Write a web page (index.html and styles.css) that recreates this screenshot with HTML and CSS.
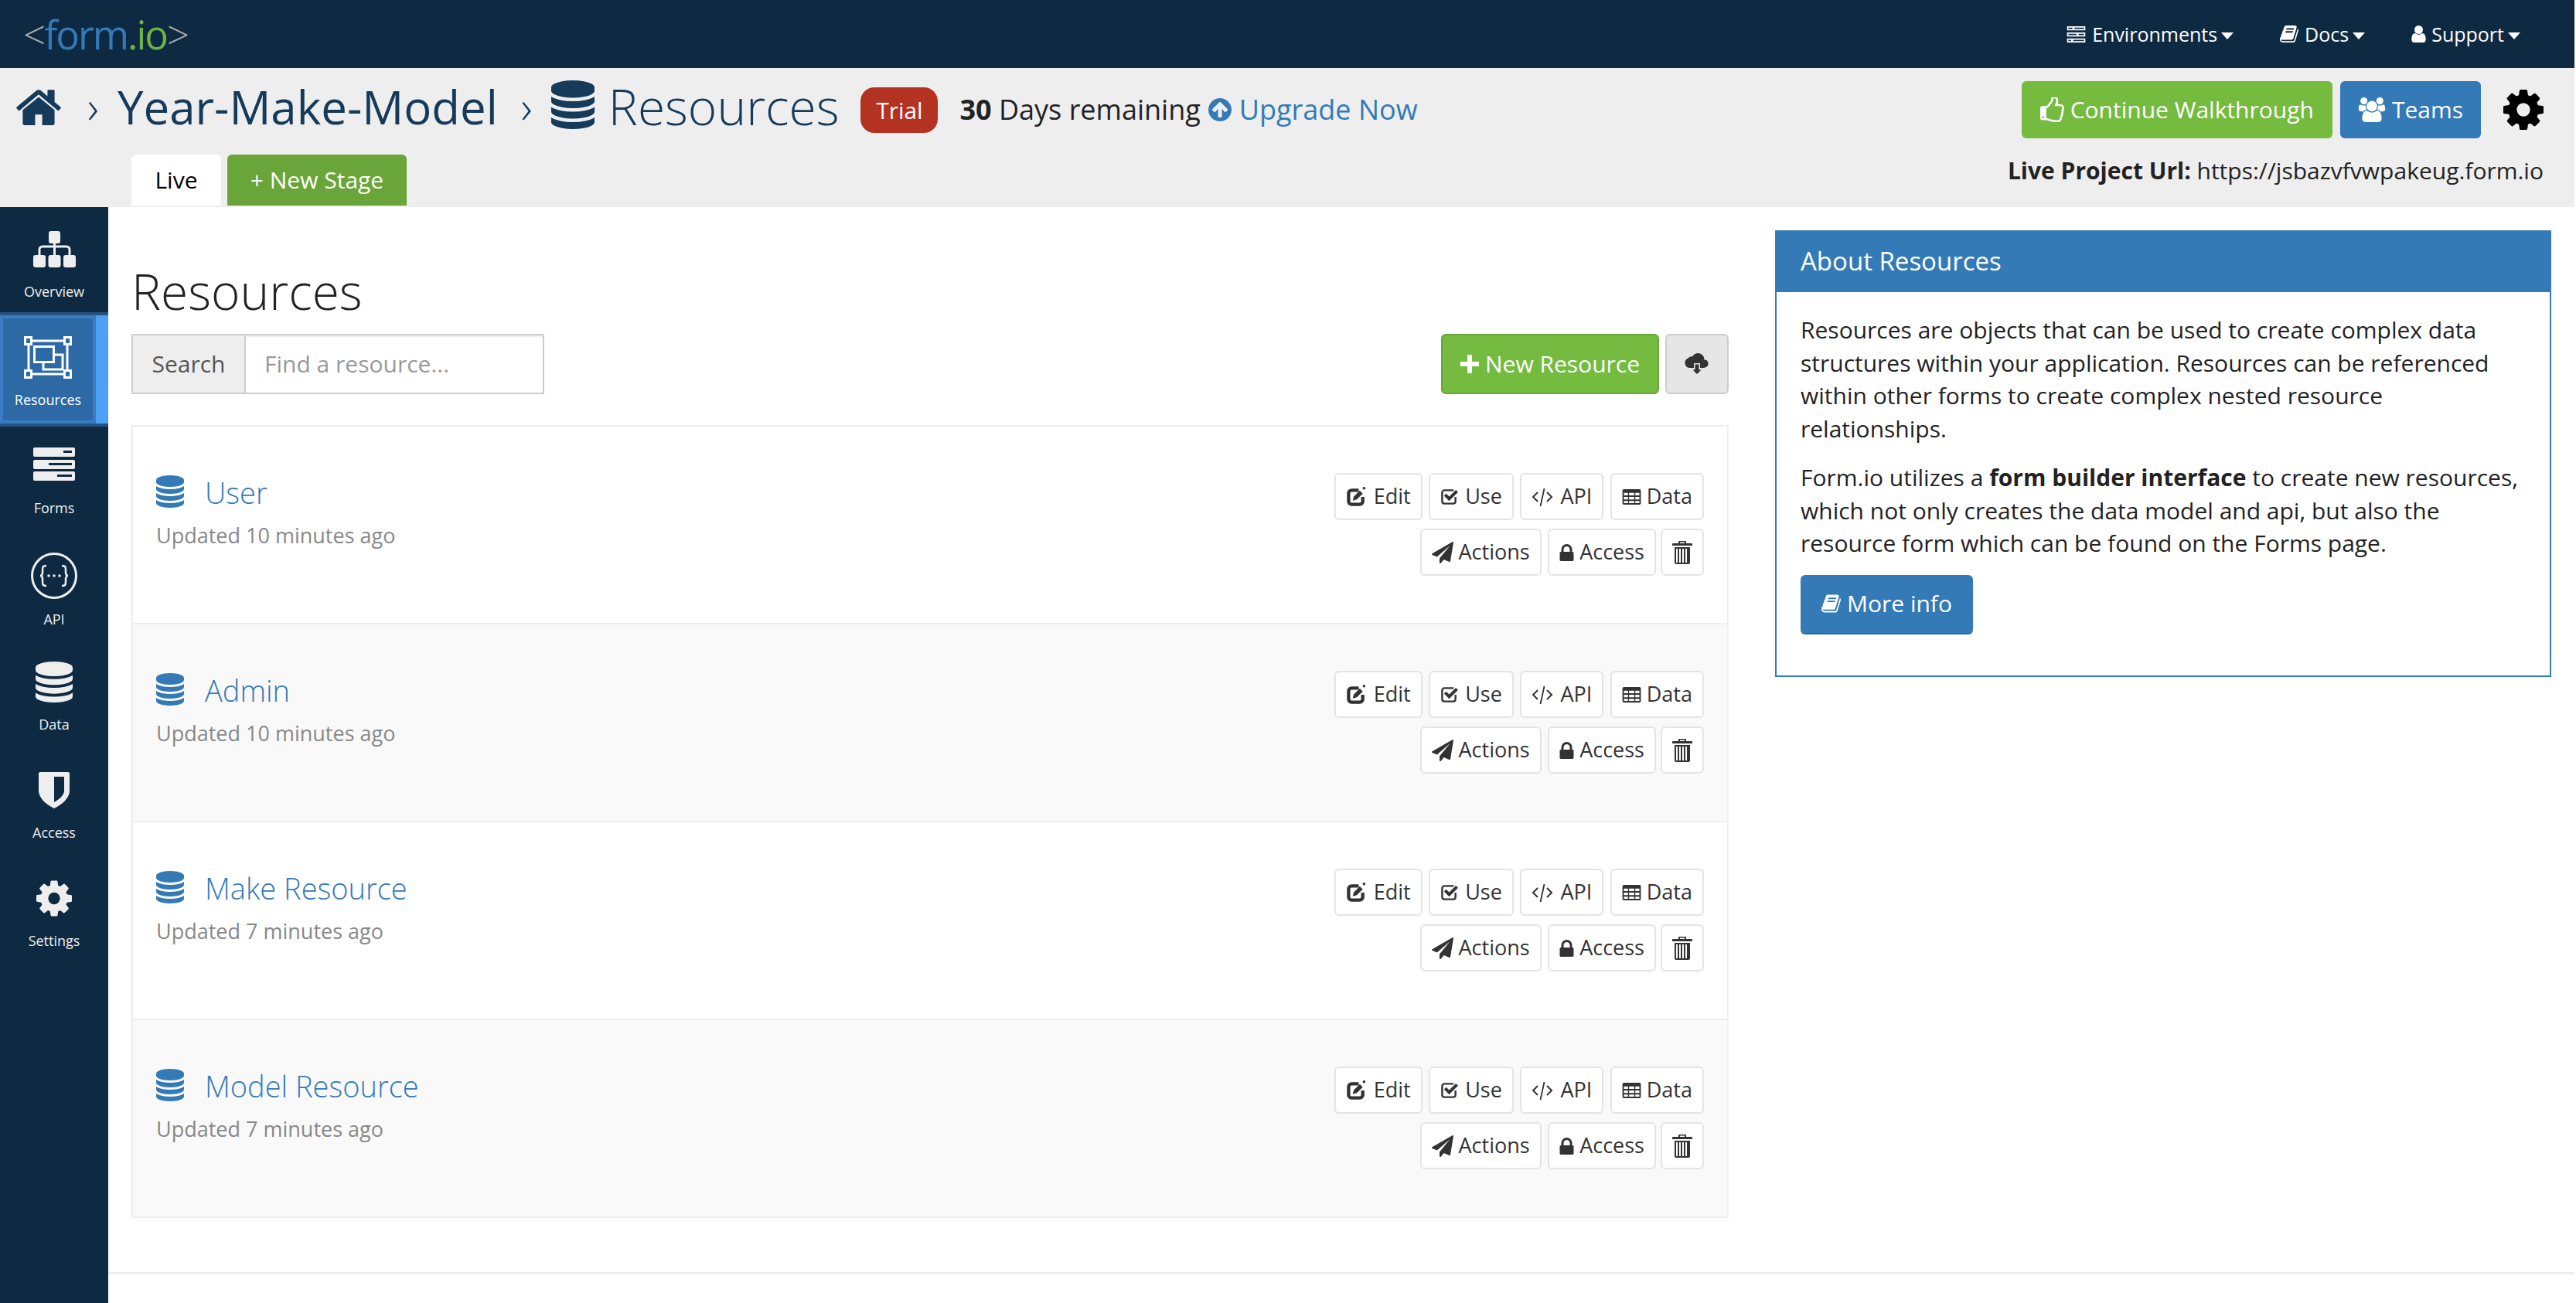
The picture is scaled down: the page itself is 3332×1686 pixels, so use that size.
FILE: index.html
```html
<!DOCTYPE html>
<html>
<head>
  <meta charset="UTF-8"/>
  <title>Resources - Year-Make-Model</title>
  <link rel="stylesheet" href="styles.css">
</head>
<body>
<svg class="sprite" xmlns="http://www.w3.org/2000/svg">
  <symbol id="i-db" viewBox="128 0 1536 1792" preserveAspectRatio="none"><path d="M896 768q237 0 443-43t325-127v170q0 69-103 128t-280 93.500-385 34.500-385-34.500-280-93.500-103-128v-170q119 84 325 127t443 43zm0 768q237 0 443-43t325-127v170q0 69-103 128t-280 93.500-385 34.500-385-34.500-280-93.500-103-128v-170q119 84 325 127t443 43zm0-384q237 0 443-43t325-127v170q0 69-103 128t-280 93.500-385 34.500-385-34.500-280-93.500-103-128v-170q119 84 325 127t443 43zm0-1152q208 0 385 34.500t280 93.500 103 128v128q0 69-103 128t-280 93.500-385 34.500-385-34.500-280-93.500-103-128v-128q0-69 103-128t280-93.500 385-34.500z"/></symbol>
  <symbol id="i-cog" viewBox="128 128 1536 1536"><path d="M1152 896q0-106-75-181t-181-75-181 75-75 181 75 181 181 75 181-75 75-181zm512-109v222q0 12-8 23t-20 13l-185 28q-19 54-39 91 35 50 107 138 10 12 10 25t-9 23q-27 37-99 108t-94 71q-12 0-26-9l-138-108q-44 23-91 38-16 136-29 186-7 28-36 28h-222q-14 0-24.500-8.500t-11.500-21.500l-28-184q-49-16-90-37l-141 107q-10 9-25 9-14 0-25-11-126-114-165-168-7-10-7-23 0-12 8-23 15-21 51-66.500t54-70.500q-27-50-41-99l-183-27q-13-2-21-12.500t-8-23.500v-222q0-12 8-23t19-13l186-28q14-46 39-92-40-57-107-138-10-12-10-24 0-10 9-23 26-36 98.500-107.500t94.500-71.500q13 0 26 10l138 107q44-23 91-38 16-136 29-186 7-28 36-28h222q14 0 24.500 8.500t11.500 21.500l28 184q49 16 90 37l142-107q9-9 24-9 13 0 25 10 129 119 165 170 7 8 7 22 0 12-8 23-15 21-51 66.500t-54 70.500q26 50 41 98l183 28q13 2 21 12.500t8 23.500z"/></symbol>
  <symbol id="i-home" viewBox="96 192 1600 1344"><path d="M1472 992v480q0 26-19 45t-45 19h-384v-384h-256v384h-384q-26 0-45-19t-19-45v-480q0-1 .5-3t.5-3l575-474 575 474q1 2 1 6zm223-69l-62 74q-8 9-21 11h-3q-13 0-21-7l-692-577-692 577q-12 8-24 7-13-2-21-11l-62-74q-8-10-7-23.500t11-21.500l719-599q32-26 76-26t76 26l244 204v-195q0-14 9-23t23-9h192q14 0 23 9t9 23v408l219 182q10 8 11 21.500t-7 23.500z"/></symbol>
  <symbol id="i-thumb" viewBox="128 128 1536 1536"><path d="M384 1344q0-26-19-45t-45-19-45 19-19 45 19 45 45 19 45-19 19-45zm1152-576q0-51-39-89.500t-89-38.500h-352q0-58 48-159.500t48-160.500q0-98-32-145t-128-47q-26 26-38 85t-30.500 125.500-59.500 109.500q-22 23-77 91-4 5-23 30t-31.500 41-34.500 42.500-40 44-38.500 35.500-40 27-35.500 9h-32v640h32q13 0 31.500 3t33 6.500 38 11 35 11.500 35.500 12.500 29 10.500q211 73 342 73h121q192 0 192-167 0-26-5-56 30-16 47.500-52.500t17.500-73.500-18-69q53-50 53-119 0-25-10-55.500t-25-47.500q32-1 53.500-47t21.500-81zm128-1q0 89-49 163 9 33 9 69 0 77-38 144 3 21 3 43 0 101-60 178 1 139-85 219.500t-227 80.500h-129q-96 0-189.500-22.500t-216.500-65.500q-116-40-138-40h-288q-53 0-90.500-37.500t-37.500-90.500v-640q0-53 37.500-90.500t90.500-37.500h274q36-24 137-155 58-75 107-128 24-25 35.500-85.500t30.500-126.500 62-108q39-37 90-37 84 0 151 32.500t102 101.500 35 186q0 93-48 192h176q104 0 180 76t76 179z"/></symbol>
  <symbol id="i-users" viewBox="0 0 1920 1792"><path d="M593 896q-162 5-265 128h-134q-82 0-138-40.500t-56-118.500q0-353 124-353 6 0 43.500 21t97.500 42.500 119 21.500q67 0 133-23-5 37-5 66 0 139 81 256zm1071 637q0 120-73 189.500t-194 69.500h-874q-121 0-194-69.500t-73-189.500q0-53 3.500-103.500t14-109 26.500-108.500 43-97.500 62-81 85.500-53.500 111.500-20q10 0 43 21.500t73 48 107 48 135 21.500 135-21.500 107-48 73-48 43-21.500q61 0 111.500 20t85.500 53.500 62 81 43 97.500 26.500 108.500 14 109 3.500 103.500zm-1024-1277q0 106-75 181t-181 75-181-75-75-181 75-181 181-75 181 75 75 181zm704 384q0 159-112.500 271.500t-271.500 112.500-271.500-112.500-112.500-271.500 112.500-271.500 271.500-112.500 271.500 112.500 112.500 271.500zm576 225q0 78-56 118.500t-138 40.500h-134q-103-123-265-128 81-117 81-256 0-29-5-66 66 23 133 23 59 0 119-21.500t97.500-42.500 43.500-21q124 0 124 353zm-128-609q0 106-75 181t-181 75-181-75-75-181 75-181 181-75 181 75 75 181z"/></symbol>
  <symbol id="i-book" viewBox="64 128 1664 1536"><path d="M1703 478q40 57 18 129l-275 906q-19 64-76.500 107.500t-122.500 43.500h-923q-77 0-148.500-53.500t-99.500-131.500q-24-67-2-127 0-4 3-27t4-37q1-8-3-21.500t-3-19.500q2-11 8-21t16.500-23.500 16.500-23.500q23-38 45-91.500t30-91.500q3-10 .5-30t-.5-28q3-11 17-28t17-23q21-36 42-92t25-90q1-9-2.500-32t.5-28q4-13 22-30.500t22-22.500q19-26 42.500-84.500t27.500-96.500q1-8-3-25.500t-2-26.500q2-8 9-18t18-23 17-21q8-12 16.500-30.500t15-35 16-36 19.500-32 26.500-23.500 36-11.500 47.500 5.500l-1 3q38-9 51-9h761q74 0 114 56t18 130l-274 906q-36 119-71.500 153.500t-128.500 34.500h-869q-27 0-38 15-11 16-1 43 24 70 144 70h923q29 0 56-15.500t35-41.500l300-987q7-22 5-57 38 15 59 43zm-1064 2q-4 13 2 22.500t20 9.500h608q13 0 25.500-9.500t16.500-22.500l21-64q4-13-2-22.500t-20-9.500h-608q-13 0-25.500 9.500t-16.500 22.500zm-83 256q-4 13 2 22.500t20 9.500h608q13 0 25.500-9.500t16.500-22.500l21-64q4-13-2-22.500t-20-9.500h-608q-13 0-25.500 9.500t-16.500 22.500z"/></symbol>
  <symbol id="i-user" viewBox="256 128 1280 1536"><path d="M1536 1399q0 109-62.500 187t-150.500 78h-854q-88 0-150.500-78t-62.500-187q0-85 8.500-160.500t31.500-152 58.500-131 94-89 134.500-34.500q131 128 313 128t313-128q76 0 134.500 34.500t94 89 58.500 131 31.500 152 8.500 160.500zm-256-887q0 159-112.500 271.500t-271.500 112.500-271.500-112.500-112.500-271.500 112.500-271.500 271.500-112.500 271.500 112.500 112.500 271.500z"/></symbol>
  <symbol id="i-tasks" viewBox="0 0 27 24"><path d="M0 0h27v6H0zM0 9h27v6H0zM0 18h27v6H0z"/><path class="cut" d="M2 2h6v2H2zM11 2h14v2H11zM2 11h12v2H2zM17 11h8v2h-8zM2 20h4v2H2zM9 20h16v2H9z"/></symbol>
  <symbol id="i-up" viewBox="128 128 1536 1536"><path d="M1412 895q0-27-18-45l-362-362-91-91q-18-18-45-18t-45 18l-91 91-362 362q-18 18-18 45t18 45l91 91q18 18 45 18t45-18l189-189v502q0 26 19 45t45 19h128q26 0 45-19t19-45v-502l189 189q19 19 45 19t45-19l91-91q18-18 18-45zm252 1q0 209-103 385.500t-279.500 279.500-385.500 103-385.500-103-279.500-279.500-103-385.500 103-385.500 279.500-279.500 385.500-103 385.500 103 279.500 279.500 103 385.500z"/></symbol>
  <symbol id="i-plus" viewBox="0 0 24 24"><path d="M9 0h6v9h9v6h-9v9H9v-9H0V9h9z"/></symbol>
  <symbol id="i-cloud" viewBox="0 0 32 32"><path d="M25.500 10.500a5 5 0 0 1 1.500 9.800 5 5 0 0 1-2 .7H7a6.500 6.500 0 0 1-2.500-12.500 6.500 6.500 0 0 1 5.500-2.300A9 9 0 0 1 16 2a8.500 8.500 0 0 1 9.500 8.500z"/><path class="gap" d="M12 15h8v7h5l-9 9-9-9h5z"/><path d="M13.500 16.500h5v7h3L16 29l-5.500-5.500h3z"/></symbol>
  <symbol id="i-edit" viewBox="0 0 28 27"><path class="line" d="M17 4.500H7.500a4 4 0 0 0-4 4v11a4 4 0 0 0 4 4h11a4 4 0 0 0 4-4v-6" stroke-width="4.500"/><path d="M9 18.500l1.500-5.500 8-8 4 4-8 8zM23.500 0a2 2 0 0 1 2.500 2.500 2 2 0 0 1-2.500 1 2 2 0 0 1 0-3.500z"/></symbol>
  <symbol id="i-check" viewBox="0 0 24 23"><path class="line" d="M18 2.500H5.500a3 3 0 0 0-3 3v12a3 3 0 0 0 3 3h12a3 3 0 0 0 3-3v-6" stroke-width="2.500"/><path d="M5 10l3-3 4 4 9-9 3 3-12 12z"/></symbol>
  <symbol id="i-code" viewBox="0 0 28 28"><path class="line" d="M8 8l-6 6 6 6M20 8l6 6-6 6" stroke-width="2"/><path class="line" d="M16.500 3l-5 23" stroke-width="1.800"/></symbol>
  <symbol id="i-table" viewBox="0 0 25 21"><path fill-rule="evenodd" d="M2 0h21a2 2 0 0 1 2 2v17a2 2 0 0 1-2 2H2a2 2 0 0 1-2-2V2a2 2 0 0 1 2-2zM2 5v3.500h5.500V5zM9 5v3.500h7V5zM17.500 5v3.500H23V5zM2 10.500V14h5.500v-3.500zM9 10.500V14h7v-3.500zM17.500 10.500V14H23v-3.500zM2 16v3h5.500v-3zM9 16v3h7v-3zM17.500 16v3H23v-3z"/></symbol>
  <symbol id="i-plane" viewBox="0 0 1792 1792"><path d="M1764 11q33 24 27 64l-256 1536q-5 29-32 45-14 8-31 8-11 0-24-5l-453-185-242 295q-18 23-49 23-13 0-22-4-19-7-30.500-23.500t-11.500-36.500v-349l864-1059-1069 925-395-162q-37-14-40-55-2-40 32-59l1664-960q15-9 32-9 20 0 36 11z"/></symbol>
  <symbol id="i-lock" viewBox="320 128 1152 1408"><path d="M640 768h512v-192q0-106-75-181t-181-75-181 75-75 181v192zm832 96v576q0 40-28 68t-68 28h-960q-40 0-68-28t-28-68v-576q0-40 28-68t68-28h32v-192q0-184 132-316t316-132 316 132 132 316v192h32q40 0 68 28t28 68z"/></symbol>
  <symbol id="i-trash" viewBox="0 0 26 30"><path d="M9 0h8a1 1 0 0 1 1 1v2h7a1 1 0 0 1 1 1v2H0V4a1 1 0 0 1 1-1h7V1a1 1 0 0 1 1-1zm1 1.500V3h6V1.500z"/><path fill-rule="evenodd" d="M3 8h20v20a2 2 0 0 1-2 2H5a2 2 0 0 1-2-2zm2 2v18h2V10zm4 0v18h2V10zm4 0v18h2V10zm4 0v18h2V10z"/></symbol>
</svg>

<nav class="topnav">
  <a class="logo"><span class="logo-br">&lt;</span><span class="logo-form">form</span><span class="logo-io">.io</span><span class="logo-br">&gt;</span></a>
  <ul class="topnav-menu">
    <li><svg class="ic ic-tasks"><use href="#i-tasks"/></svg>Environments<span class="caret"></span></li>
    <li><svg class="ic ic-nbook"><use href="#i-book"/></svg>Docs<span class="caret"></span></li>
    <li><svg class="ic ic-nuser"><use href="#i-user"/></svg>Support<span class="caret"></span></li>
  </ul>
</nav>

<header class="project">
  <div class="project-top">
    <div class="crumbs">
      <svg class="ic ic-home"><use href="#i-home"/></svg>
      <span class="crumb-sep">›</span>
      <span class="crumb-name">Year-Make-Model</span>
      <span class="crumb-sep crumb-sep2">›</span>
      <svg class="ic ic-cdb"><use href="#i-db"/></svg>
      <span class="crumb-page">Resources</span>
      <span class="trial">Trial</span>
      <span class="days"><b>30</b> Days remaining</span>
      <a class="upgrade"><svg class="ic ic-up"><use href="#i-up"/></svg>Upgrade Now</a>
    </div>
    <div class="project-btns">
      <a class="btn btn-walk"><svg class="ic ic-thumb"><use href="#i-thumb"/></svg>Continue Walkthrough</a>
      <a class="btn btn-teams"><svg class="ic ic-users"><use href="#i-users"/></svg>Teams</a>
      <svg class="ic ic-gear"><use href="#i-cog"/></svg>
    </div>
  </div>
  <div class="project-bottom">
    <div class="tabs">
      <a class="tab tab-live">Live</a>
      <a class="tab tab-new">+ New Stage</a>
    </div>
    <div class="live-url"><b>Live Project Url:</b> https://jsbazvfvwpakeug.form.io</div>
  </div>
</header>

<div class="page">
  <aside class="sidebar">
    <a class="side-item">
      <svg class="side-ic" viewBox="0 0 80 64"><g transform="translate(13 7)"><rect x="20" y="0" width="15" height="16" rx="3"/><path class="side-line" d="M27.500 14v17M8 31v-7a4 4 0 0 1 4-4h31a4 4 0 0 1 4 4v7"/><rect x="0" y="31" width="16" height="16" rx="3"/><rect x="19.500" y="31" width="16" height="16" rx="3"/><rect x="39" y="31" width="16" height="16" rx="3"/></g></svg>
      <span>Overview</span>
    </a>
    <a class="side-item side-active">
      <svg class="side-ic" viewBox="0 0 80 64"><g transform="translate(9 3)" fill="none" stroke="#fff" stroke-width="3"><rect x="6" y="6" width="50" height="43"/><rect x="1.500" y="1.500" width="8" height="9" fill="#2c69a5"/><rect x="52.500" y="1.500" width="8" height="9" fill="#2c69a5"/><rect x="1.500" y="44.500" width="8" height="9" fill="#2c69a5"/><rect x="52.500" y="44.500" width="8" height="9" fill="#2c69a5"/><rect x="25" y="24" width="25" height="19"/><rect x="13.500" y="13.500" width="25" height="20" fill="#2c69a5"/></g></svg>
      <span>Resources</span>
    </a>
    <a class="side-item">
      <svg class="side-ic" viewBox="0 0 80 64"><g transform="translate(13 7)"><rect width="54" height="12" rx="2"/><rect y="16" width="54" height="12" rx="2"/><rect y="31" width="54" height="12" rx="2"/><rect class="side-cut" x="39" y="4" width="11" height="3"/><rect class="side-cut" x="20" y="20" width="30" height="3"/><rect class="side-cut" x="31" y="35" width="19" height="3"/></g></svg>
      <span>Forms</span>
    </a>
    <a class="side-item side-api">
      <svg class="side-ic" viewBox="0 0 80 68"><g class="api-line" fill="none" stroke-width="3"><circle cx="40" cy="33" r="28.500"/><path stroke-width="2.500" d="M30 20c-5 0-5 2-5 6v3c0 3-1 4-3 4 2 0 3 1 3 4v3c0 4 0 6 5 6M50 20c5 0 5 2 5 6v3c0 3 1 4 3 4-2 0-3 1-3 4v3c0 4 0 6-5 6"/></g><circle class="side-dot" cx="33" cy="33" r="1.800"/><circle class="side-dot" cx="40" cy="33" r="1.800"/><circle class="side-dot" cx="47" cy="33" r="1.800"/></svg>
      <span>API</span>
    </a>
    <a class="side-item">
      <svg class="side-ic" viewBox="0 0 80 64"><use href="#i-db" x="16" y="4" width="48" height="53"/></svg>
      <span>Data</span>
    </a>
    <a class="side-item">
      <svg class="side-ic" viewBox="0 0 80 64"><g transform="translate(20 7)"><path d="M2 0h36a2 2 0 0 1 2 2v22c0 10-10 18-20 23C10 42 0 34 0 24V2a2 2 0 0 1 2-2z"/><path class="side-cut" d="M20 6h13v18c0 6-6 11-13 15z"/></g></svg>
      <span>Access</span>
    </a>
    <a class="side-item">
      <svg class="side-ic" viewBox="0 0 80 64"><use href="#i-cog" x="17" y="7" width="46" height="47"/></svg>
      <span>Settings</span>
    </a>
  </aside>

  <main class="main">
    <div class="content">
      <section class="resources">
        <h2 class="page-title">Resources</h2>
        <div class="toolbar">
          <div class="search">
            <span class="search-label">Search</span>
            <span class="search-input">Find a resource...</span>
          </div>
          <div class="toolbar-btns">
            <a class="btn btn-new"><svg class="ic ic-plus"><use href="#i-plus"/></svg>New Resource</a>
            <a class="btn btn-cloud"><svg class="ic ic-cloud"><use href="#i-cloud"/></svg></a>
          </div>
        </div>
        <div class="res-list">
          <div class="res-row">
            <div class="res-info">
              <a class="res-name"><svg class="ic ic-rdb"><use href="#i-db"/></svg>User</a>
              <div class="res-time">Updated 10 minutes ago</div>
            </div>
            <div class="res-actions">
              <a class="act"><svg class="ic ic-edit"><use href="#i-edit"/></svg>Edit</a>
              <a class="act"><svg class="ic ic-check"><use href="#i-check"/></svg>Use</a>
              <a class="act"><svg class="ic ic-code"><use href="#i-code"/></svg>API</a>
              <a class="act"><svg class="ic ic-table"><use href="#i-table"/></svg>Data</a>
              <a class="act"><svg class="ic ic-plane"><use href="#i-plane"/></svg>Actions</a>
              <a class="act"><svg class="ic ic-lock"><use href="#i-lock"/></svg>Access</a>
              <a class="act act-trash"><svg class="ic ic-trash"><use href="#i-trash"/></svg></a>
            </div>
          </div>
          <div class="res-row">
            <div class="res-info">
              <a class="res-name"><svg class="ic ic-rdb"><use href="#i-db"/></svg>Admin</a>
              <div class="res-time">Updated 10 minutes ago</div>
            </div>
            <div class="res-actions">
              <a class="act"><svg class="ic ic-edit"><use href="#i-edit"/></svg>Edit</a>
              <a class="act"><svg class="ic ic-check"><use href="#i-check"/></svg>Use</a>
              <a class="act"><svg class="ic ic-code"><use href="#i-code"/></svg>API</a>
              <a class="act"><svg class="ic ic-table"><use href="#i-table"/></svg>Data</a>
              <a class="act"><svg class="ic ic-plane"><use href="#i-plane"/></svg>Actions</a>
              <a class="act"><svg class="ic ic-lock"><use href="#i-lock"/></svg>Access</a>
              <a class="act act-trash"><svg class="ic ic-trash"><use href="#i-trash"/></svg></a>
            </div>
          </div>
          <div class="res-row">
            <div class="res-info">
              <a class="res-name"><svg class="ic ic-rdb"><use href="#i-db"/></svg>Make Resource</a>
              <div class="res-time">Updated 7 minutes ago</div>
            </div>
            <div class="res-actions">
              <a class="act"><svg class="ic ic-edit"><use href="#i-edit"/></svg>Edit</a>
              <a class="act"><svg class="ic ic-check"><use href="#i-check"/></svg>Use</a>
              <a class="act"><svg class="ic ic-code"><use href="#i-code"/></svg>API</a>
              <a class="act"><svg class="ic ic-table"><use href="#i-table"/></svg>Data</a>
              <a class="act"><svg class="ic ic-plane"><use href="#i-plane"/></svg>Actions</a>
              <a class="act"><svg class="ic ic-lock"><use href="#i-lock"/></svg>Access</a>
              <a class="act act-trash"><svg class="ic ic-trash"><use href="#i-trash"/></svg></a>
            </div>
          </div>
          <div class="res-row">
            <div class="res-info">
              <a class="res-name"><svg class="ic ic-rdb"><use href="#i-db"/></svg>Model Resource</a>
              <div class="res-time">Updated 7 minutes ago</div>
            </div>
            <div class="res-actions">
              <a class="act"><svg class="ic ic-edit"><use href="#i-edit"/></svg>Edit</a>
              <a class="act"><svg class="ic ic-check"><use href="#i-check"/></svg>Use</a>
              <a class="act"><svg class="ic ic-code"><use href="#i-code"/></svg>API</a>
              <a class="act"><svg class="ic ic-table"><use href="#i-table"/></svg>Data</a>
              <a class="act"><svg class="ic ic-plane"><use href="#i-plane"/></svg>Actions</a>
              <a class="act"><svg class="ic ic-lock"><use href="#i-lock"/></svg>Access</a>
              <a class="act act-trash"><svg class="ic ic-trash"><use href="#i-trash"/></svg></a>
            </div>
          </div>
        </div>
      </section>

      <section class="about">
        <div class="about-head">About Resources</div>
        <div class="about-body">
          <p>Resources are objects that can be used to create complex data structures within your application. Resources can be referenced within other forms to create complex nested resource relationships.</p>
          <p>Form.io utilizes a <b>form builder interface</b> to create new resources, which not only creates the data model and api, but also the resource form which can be found on the Forms page.</p>
          <a class="btn btn-info"><svg class="ic ic-ibook"><use href="#i-book"/></svg>More info</a>
        </div>
      </section>
    </div>
    <hr class="foot-rule">
  </main>
</div>
</body>
</html>
```

FILE: styles.css
```css
:root{
  --navy: #0e2a42;
  --ink: #153a5a;
  --blue: #337ab7;
  --green: #74bb3f;
}
html, body{
  height: 100%;
}
body{
  margin: 0;
  padding-right: 2px;
  box-sizing: border-box;
  display: flex;
  flex-direction: column;
  overflow: hidden;
  color: #222;
  background: #fff;
  font-family: "Open Sans", "Liberation Sans", sans-serif;
  font-size: 30px;
  line-height: 42.5px;
}
.sprite{
  display: none;
}
.ic{
  display: block;
  flex: none;
  fill: currentColor;
}
.cut{fill: var(--navy)}
.gap{fill: #e6e6e6}
.line{
  fill: none;
  stroke: currentColor;
}

/* top bar */
.topnav{
  height: 88px;
  flex: none;
  display: flex;
  align-items: center;
  justify-content: space-between;
  background: var(--navy);
  color: #fff;
}
.logo{
  margin-left: 30px;
  font-size: 51px;
  line-height: 84px;
  letter-spacing: -2px;
}
.logo-br{color: #a9adb0; font-weight: 300}
.logo-form{color: var(--blue)}
.logo-io{color: #6cb33f}
.topnav-menu{
  list-style: none;
  display: flex;
  margin: 0 70px 0 0;
  padding: 0;
  font-size: 25px;
}
.topnav-menu li{
  display: flex;
  align-items: center;
  margin-left: 60px;
}
.ic-tasks{width: 27px; height: 21px; margin-right: 7px}
.ic-nbook{width: 24px; height: 24px; margin-right: 8px}
.ic-nuser{width: 19px; height: 22px; margin-right: 7px}
.caret{
  width: 0;
  height: 0;
  margin-left: 5px;
  margin-top: 4px;
  border-top: 9px solid #fff;
  border-left: 8px solid transparent;
  border-right: 8px solid transparent;
}

/* project header */
.project{
  height: 180px;
  flex: none;
  box-sizing: border-box;
  padding: 14px 40px 0 21px;
  background: #eee;
}
.project-top{
  height: 80px;
  margin-bottom: 18px;
  display: flex;
  align-items: center;
  justify-content: space-between;
}
.crumbs{
  display: flex;
  align-items: center;
  color: var(--ink);
}
.ic-home{width: 58px; height: 48px; margin-top: -8px}
.crumb-sep{
  width: 14px;
  margin: -8px 25px 0 34px;
  font-size: 58px;
  font-weight: 300;
}
.crumb-sep2{margin-left: 30px; margin-right: 25px}
.crumb-name{
  font-size: 60px;
  line-height: 80px;
  margin-top: -8px;
}
.ic-cdb{width: 56px; height: 63px; margin-top: -14px}
.crumb-page{
  margin: -8px 0 0 18px;
  font-size: 64px;
  font-weight: 300;
  line-height: 80px;
}
.trial{
  width: 100px;
  height: 59px;
  margin-left: 28px;
  border-radius: 18px;
  background: #b33222;
  color: #fff;
  font-size: 29.75px;
  line-height: 59px;
  text-align: center;
}
.days{
  margin-left: 28px;
  color: #222;
  font-size: 36px;
}
.upgrade{
  display: flex;
  align-items: center;
  margin-left: 10px;
  color: var(--blue);
  font-size: 36px;
}
.ic-up{width: 30px; height: 30px; margin-right: 10px}
.project-btns{
  display: flex;
  align-items: center;
  gap: 10px;
}
.btn{
  display: flex;
  align-items: center;
  box-sizing: border-box;
  border-radius: 6px;
  color: #fff;
  font-size: 30px;
}
.btn-walk{
  height: 74px;
  padding: 0 24px;
  background: var(--green);
}
.btn-teams{
  height: 74px;
  padding: 0 23px;
  background: var(--blue);
}
.ic-thumb{width: 31px; height: 33px; margin-right: 8px}
.ic-users{width: 36px; height: 32px; margin-right: 8px}
.ic-gear{width: 52px; height: 52px; margin-left: 19px; color: #000}
.project-bottom{
  display: flex;
  align-items: flex-start;
  justify-content: space-between;
  padding-left: 149px;
}
.tabs{
  display: flex;
  gap: 8px;
}
.tab{
  height: 66px;
  border-radius: 6px 6px 0 0;
  line-height: 66px;
  text-align: center;
}
.tab-live{
  width: 116px;
  background: #fff;
  color: #000;
}
.tab-new{
  width: 232px;
  background: #6aa53a;
  color: #fff;
}
.live-url{
  color: #222;
}

/* sidebar */
.page{
  flex: 1;
  display: flex;
  min-height: 0;
}
.sidebar{
  width: 140px;
  flex: none;
  background: var(--navy);
  color: #eee;
}
.side-item{
  height: 140px;
  display: flex;
  flex-direction: column;
  align-items: center;
  box-sizing: border-box;
  padding-top: 24px;
  font-size: 18px;
  line-height: 26px;
}
.side-ic{
  width: 80px;
  height: 64px;
  margin-bottom: 8px;
  fill: #eee;
}
.side-line{
  fill: none;
  stroke: #eee;
  stroke-width: 3;
}
.side-cut{fill: var(--navy)}
.side-dot{fill: #eee}
.api-line{stroke: #eee}
.side-api .side-ic{height: 68px}
.side-active{
  background: #2c69a5;
  color: #fff;
  box-shadow: 0 0 0 4px #3b7cc4 inset, 0 4px 0 #26527f, 0 -4px 0 #26527f;
  border-right: 16px solid #4b9ff4;
}

/* main */
.main{
  flex: 1;
  min-width: 0;
}
.content{
  display: grid;
  grid-template-columns: 2066px 1004px;
  column-gap: 60px;
  padding: 30px 0 0 30px;
}
.page-title{
  margin: 44px 0 20px;
  color: #222;
  font-size: 64px;
  font-weight: 300;
  line-height: 70px;
}
.toolbar{
  display: flex;
  justify-content: space-between;
  margin-bottom: 40px;
}
.search{
  width: 534px;
  height: 78px;
  display: flex;
  box-sizing: border-box;
  border: 2px solid #ccc;
}
.search-label{
  width: 144px;
  border-right: 2px solid #ccc;
  background: #eee;
  color: #555;
  line-height: 74px;
  text-align: center;
}
.search-input{
  padding-left: 24px;
  color: #999;
  line-height: 74px;
  box-shadow: 0 2px 2px rgba(0,0,0,.08) inset;
  flex: 1;
}
.toolbar-btns{
  display: flex;
  gap: 8px;
}
.btn-new{
  width: 282px;
  height: 78px;
  justify-content: center;
  border: 2px solid #6aa53a;
  background: var(--green);
}
.ic-plus{width: 24px; height: 24px; margin-right: 8px}
.btn-cloud{
  width: 82px;
  height: 78px;
  justify-content: center;
  border: 2px solid #ccc;
  background: #e6e6e6;
  color: #333;
}
.ic-cloud{width: 32px; height: 32px}

/* resource rows */
.res-list{
  border: 2px solid #eee;
  border-bottom: 0;
}
.res-row{
  height: 256px;
  display: flex;
  align-items: flex-start;
  justify-content: space-between;
  box-sizing: border-box;
  padding: 60px 30px 0;
  border-bottom: 2px solid #eee;
}
.res-row:nth-child(even){background: #f9f9f9}
.res-name{
  display: flex;
  align-items: center;
  height: 50px;
  color: var(--blue);
  font-size: 38px;
  font-weight: 300;
}
.ic-rdb{width: 36px; height: 42px; margin-right: 27px; margin-top: -3px}
.res-time{
  margin-top: 10px;
  color: #888;
  font-size: 27px;
}
.res-actions{
  width: 500px;
  flex: none;
  display: flex;
  flex-wrap: wrap;
  justify-content: flex-end;
  gap: 11px 8.500px;
}
.act{
  height: 61px;
  display: flex;
  align-items: center;
  box-sizing: border-box;
  padding: 0 13px;
  border: 2px solid #e4e4e4;
  border-radius: 6px;
  background: #fff;
  color: #333;
  font-size: 27px;
}
.act-trash{margin-left: -2.500px}
.ic-edit{width: 27px; height: 26px; margin-right: 9px}
.ic-check{width: 23px; height: 22px; margin-right: 9px}
.ic-code{width: 28px; height: 28px; margin-right: 9px}
.ic-table{width: 25px; height: 20px; margin-right: 7px}
.ic-plane{width: 28px; height: 28px; margin-right: 7px}
.ic-lock{width: 19px; height: 22px; margin-right: 7px}
.ic-trash{width: 26px; height: 30px}

/* about panel */
.about{
  height: 578px;
  box-sizing: border-box;
  border: 2px solid var(--blue);
}
.about-head{
  height: 78px;
  padding-left: 31px;
  background: var(--blue);
  color: #fff;
  font-size: 33px;
  line-height: 76px;
}
.about-body{
  padding: 28px 31px 0;
}
.about-body p{
  margin: 0 0 21px;
}
.about-body p:last-of-type{margin-bottom: 19px}
.btn-info{
  display: inline-flex;
  width: 223px;
  height: 77px;
  justify-content: center;
  background: var(--blue);
  border-bottom: 2px solid #2e6da4;
}
.ic-ibook{width: 25px; height: 24px; margin-right: 8px}
.foot-rule{
  height: 3px;
  margin: 70px 0 0;
  border: 0;
  background: #eee;
}
```
